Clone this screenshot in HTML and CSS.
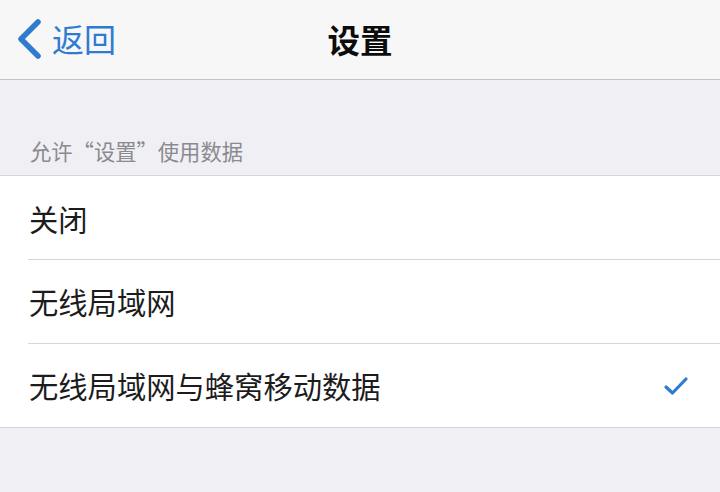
FILE: index.html
```html
<!DOCTYPE html>
<html lang="zh-CN">
<head>
    <meta charset="UTF-8">
    <meta name="viewport" content="width=device-width, initial-scale=1.0">
    <title>设置</title>
    <link rel="stylesheet" href="styles.css">
</head>
<body>
    <header class="navbar">
        <a class="back" href="#">
            <svg class="back-icon" width="26" height="40" viewBox="0 0 26 40">
                <path d="M22 3 L5 20 L22 37" fill="none" stroke="#2f7bd0" stroke-width="5.5" stroke-linecap="round" stroke-linejoin="round"/>
            </svg>
            <span>返回</span>
        </a>
        <h1 class="title">设置</h1>
    </header>

    <main>
        <p class="group-title">允许“设置”使用数据</p>
        <ul class="group">
            <li class="row">关闭</li>
            <li class="row">无线局域网</li>
            <li class="row">
                <span>无线局域网与蜂窝移动数据</span>
                <svg class="check" width="26" height="22" viewBox="0 0 26 22">
                    <path d="M3 12 L9.5 18 L23 4" fill="none" stroke="#2f7bd0" stroke-width="3.2" stroke-linecap="round" stroke-linejoin="round"/>
                </svg>
            </li>
        </ul>
    </main>
</body>
</html>
```

FILE: styles.css
```css
/* Reset */
* {
    margin: 0;
    padding: 0;
    box-sizing: border-box;
    font-family: "Noto Sans CJK SC", "Noto Sans", sans-serif;
}

body {
    width: 720px;
    height: 492px;
    overflow: hidden;
    background: #efeff4;
    color: #1c1c1c;
}

.navbar {
    position: relative;
    display: flex;
    align-items: center;
    height: 80px;
    padding-left: 16px;
    background: #f7f7f8;
    border-bottom: 1px solid #c4c4c8;
}

.back {
    display: flex;
    align-items: center;
    gap: 10px;
    text-decoration: none;
    color: #2f7bd0;
    font-size: 32px;
    padding-bottom: 4px;
}

.back-icon {
    margin-top: 2px;
}

.title {
    position: absolute;
    left: 0;
    right: 0;
    top: 0;
    height: 76px;
    display: flex;
    align-items: center;
    justify-content: center;
    padding-left: 0;
    font-size: 32.5px;
    font-weight: 700;
    color: #0c0c0c;
    pointer-events: none;
}

.group-title {
    height: 95px;
    display: flex;
    align-items: flex-end;
    padding: 0 0 9px 30px;
    font-size: 21.3px;
    color: #8a8a8f;
}

.group {
    list-style: none;
    background: #fff;
    border-top: 1px solid #d6d6da;
    border-bottom: 1px solid #d6d6da;
}

.row {
    display: flex;
    align-items: center;
    justify-content: space-between;
    height: 84px;
    padding: 0 31px 0 29px;
    font-size: 29.3px;
    position: relative;
}

.row + .row::before {
    content: "";
    position: absolute;
    left: 28px;
    right: 0;
    top: 0;
    border-top: 1px solid #d6d6da;
}

.row:first-child {
    height: 83px;
}

.check {
    margin-top: 2px;
}
```
